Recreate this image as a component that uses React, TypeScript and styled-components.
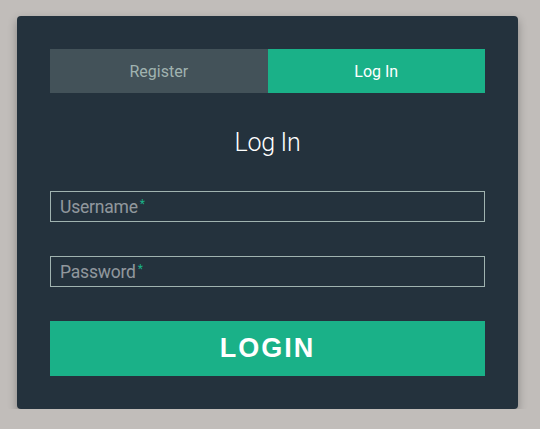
import styled, { createGlobalStyle } from "styled-components";

const GlobalStyle = createGlobalStyle`
  * {
    box-sizing: border-box;
  }
  body {
    margin: 0;
    background: #c1bdba;
    font-family: Roboto, "Liberation Sans", sans-serif;
  }
`;

const Page = styled.div`
  padding: 16px 0 0 17px;
`;

const Card = styled.div`
  width: 501px;
  padding: 33px;
  background: #24323d;
  border-radius: 4px;
  box-shadow: 0 4px 10px 0 rgba(0, 0, 0, 0.3);
`;

const Tabs = styled.ul`
  display: flex;
  list-style: none;
  margin: 0;
  padding: 0;
`;

const Tab = styled.li<{ $active?: boolean }>`
  flex: 1;
  height: 44px;
  display: flex;
  align-items: center;
  justify-content: center;
  font-size: 16px;
  background: ${(p) => (p.$active ? "#1ab188" : "#435259")};
  color: ${(p) => (p.$active ? "#ffffff" : "#a0b3b0")};
  cursor: pointer;
`;

const Title = styled.h1`
  height: 98px;
  margin: 0;
  display: flex;
  align-items: center;
  justify-content: center;
  font-size: 25px;
  font-weight: 300;
  letter-spacing: -0.3px;
  color: #ffffff;
`;

const Form = styled.form`
  display: flex;
  flex-direction: column;
  gap: 34px;
`;

const Field = styled.div`
  position: relative;
`;

const Label = styled.label`
  position: absolute;
  left: 10px;
  top: 50%;
  transform: translateY(-50%);
  font-size: 17.5px;
  letter-spacing: -0.2px;
  color: rgba(255, 255, 255, 0.5);
  pointer-events: none;
`;

const Req = styled.span`
  margin-left: 2px;
  font-size: 12px;
  vertical-align: 5px;
  color: #1ab188;
`;

const Input = styled.input`
  display: block;
  width: 100%;
  height: 31px;
  padding: 0 10px;
  background: none;
  border: 1px solid #a0b3b0;
  border-radius: 0;
  color: #ffffff;
  font-size: 17px;
  font-family: inherit;
  outline: none;
`;

const Button = styled.button`
  height: 55px;
  border: none;
  background: #1ab188;
  color: #ffffff;
  font-family: "Liberation Sans", Arial, sans-serif;
  font-size: 27px;
  font-weight: 700;
  letter-spacing: 2px;
  text-transform: uppercase;
  cursor: pointer;
`;

export default function App() {
  return (
    <>
      <GlobalStyle />
      <Page>
        <Card>
          <Tabs>
            <Tab>Register</Tab>
            <Tab $active>Log In</Tab>
          </Tabs>
          <Title>Log In</Title>
          <Form onSubmit={(e) => e.preventDefault()}>
            <Field>
              <Label>
                Username<Req>*</Req>
              </Label>
              <Input type="text" />
            </Field>
            <Field>
              <Label>
                Password<Req>*</Req>
              </Label>
              <Input type="password" />
            </Field>
            <Button type="submit">Login</Button>
          </Form>
        </Card>
      </Page>
    </>
  );
}
